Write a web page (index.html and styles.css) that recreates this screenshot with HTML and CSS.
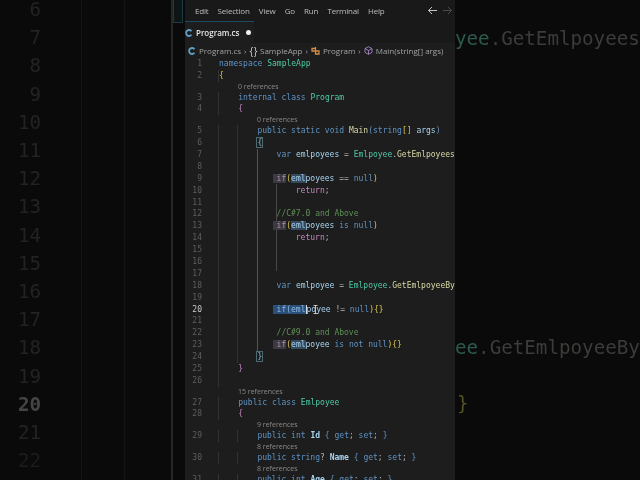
FILE: index.html
```html
<!DOCTYPE html>
<html lang="en">
<head>
<meta charset="utf-8">
<title>Program.cs</title>
<link rel="stylesheet" href="styles.css">
</head>
<body>
<div class="stage">
  <div class="side left">
    <div class="bignum">6</div><div class="bignum">7</div><div class="bignum">8</div><div class="bignum">9</div><div class="bignum">10</div><div class="bignum">11</div><div class="bignum">12</div><div class="bignum">13</div><div class="bignum">14</div><div class="bignum">15</div><div class="bignum">16</div><div class="bignum">17</div><div class="bignum">18</div><div class="bignum">19</div><div class="bignum cur">20</div><div class="bignum">21</div><div class="bignum dim">22</div>
    <div class="bigbrace"></div>
  </div>
  <main class="panel">
    <nav class="menu">
      <span>Edit</span><span>Selection</span><span>View</span><span>Go</span><span>Run</span><span>Terminal</span><span>Help</span>
      <span class="arrows">
        <svg width="11" height="9" viewBox="0 0 11 9"><path d="M10 4.5H1.5M5 1L1.5 4.5L5 8" fill="none" stroke="#c4c4c4" stroke-width="1"/></svg>
        <svg width="11" height="9" viewBox="0 0 11 9"><path d="M1 4.5H9.5M6 1L9.5 4.5L6 8" fill="none" stroke="#4a4a4a" stroke-width="1"/></svg>
      </span>
    </nav>
    <div class="tabs">
      <div class="tab">
        <svg class="cs" width="8" height="8" viewBox="0 0 8 8"><path d="M6.5 2.2A3 3 0 1 0 6.5 5.8" fill="none" stroke="#5f9fc4" stroke-width="1.8"/></svg>
        <span>Program.cs</span><i class="dot"></i>
      </div>
    </div>
    <div class="crumbs">
      <svg class="cs" width="8" height="8" viewBox="0 0 8 8"><path d="M6.5 2.2A3 3 0 1 0 6.5 5.8" fill="none" stroke="#5f9fc4" stroke-width="1.8"/></svg>
      <span>Program.cs</span><b>›</b><span class="ns">{}</span><span>SampleApp</span><b>›</b>
      <svg width="9" height="9" viewBox="0 0 9 9"><path d="M1 2.5H4.5V5H8V8H4.5V5H1Z M4.5 1V2.5" fill="none" stroke="#d18b45" stroke-width="1.3"/></svg>
      <span>Program</span><b>›</b>
      <svg width="9" height="9" viewBox="0 0 9 9"><path d="M4.5 .7L8 2.6V6.4L4.5 8.3L1 6.4V2.6ZM1 2.6L4.5 4.5L8 2.6M4.5 4.5V8.3" fill="none" stroke="#a684c9" stroke-width=".9"/></svg>
      <span>Main(string[] args)</span>
    </div>
    <div class="code">
      <div class="ln"><u>1</u><code><s class="k">namespace</s> <s class="t">SampleApp</s></code></div>
      <div class="ln"><u>2</u><code><s class="y">{</s></code></div>
      <div class="lens l1">0 references</div>
      <div class="ln"><u>3</u><code class="i1"><s class="k">internal class</s> <s class="t">Program</s></code></div>
      <div class="ln"><u>4</u><code class="i1"><s class="m">{</s></code></div>
      <div class="lens l2">0 references</div>
      <div class="ln"><u>5</u><code class="i2"><s class="k">public static void</s> <s class="f">Main</s><s class="b">(</s><s class="k">string</s><s class="y">[]</s> <s class="v">args</s><s class="b">)</s></code></div>
      <div class="ln"><u>6</u><code class="i2"><s class="brace">{</s></code></div>
      <div class="ln"><u>7</u><code class="i3"><s class="k">var</s> <s class="v">emlpoyees</s> = <s class="t">Emlpoyee</s>.<s class="f">GetEmlpoyees</s></code></div>
      <div class="ln"><u>8</u><code></code></div>
      <div class="ln"><u>9</u><code class="i3"><s class="hl">if</s><s class="y">(</s><s class="w">eml</s><s class="v">poyees</s> == <s class="k">null</s><s class="y">)</s></code></div>
      <div class="ln"><u>10</u><code class="i4"><s class="m">return</s>;</code></div>
      <div class="ln"><u>11</u><code></code></div>
      <div class="ln"><u>12</u><code class="i3"><s class="c">//C#7.0 and Above</s></code></div>
      <div class="ln"><u>13</u><code class="i3"><s class="hl">if</s><s class="y">(</s><s class="w">eml</s><s class="v">poyees</s> <s class="k">is null</s><s class="y">)</s></code></div>
      <div class="ln"><u>14</u><code class="i4"><s class="m">return</s>;</code></div>
      <div class="ln"><u>15</u><code></code></div>
      <div class="ln"><u>16</u><code></code></div>
      <div class="ln"><u>17</u><code></code></div>
      <div class="ln"><u>18</u><code class="i3"><s class="k">var</s> <s class="v">emlpoyee</s> = <s class="t">Emlpoyee</s>.<s class="f">GetEmlpoyeeBy</s></code></div>
      <div class="ln"><u>19</u><code></code></div>
      <div class="ln cur"><u>20</u><code class="i3"><s class="sel">if(eml</s><s class="v">poyee</s> != <s class="k">null</s><s class="y">){}</s></code>
        <svg class="ibeam" width="5" height="9" viewBox="0 0 5 9"><path d="M.5 .5H4.5M2.5 .5V8.5M.5 8.5H4.5" fill="none" stroke="#e8e8e8" stroke-width=".8"/></svg>
      </div>
      <div class="ln"><u>21</u><code></code></div>
      <div class="ln"><u>22</u><code class="i3"><s class="c">//C#9.0 and Above</s></code></div>
      <div class="ln"><u>23</u><code class="i3"><s class="hl">if</s><s class="y">(</s><s class="w">eml</s><s class="v">poyee</s> <s class="k">is not null</s><s class="y">){}</s></code></div>
      <div class="ln"><u>24</u><code class="i2"><s class="brace">}</s></code></div>
      <div class="ln"><u>25</u><code class="i1"><s class="m">}</s></code></div>
      <div class="ln"><u>26</u><code></code></div>
      <div class="lens l1">15 references</div>
      <div class="ln"><u>27</u><code class="i1"><s class="k">public class</s> <s class="t">Emlpoyee</s></code></div>
      <div class="ln"><u>28</u><code class="i1"><s class="m">{</s></code></div>
      <div class="lens l2">9 references</div>
      <div class="ln"><u>29</u><code class="i2"><s class="k">public int</s> <s class="v b6">Id</s> <s class="b">{</s> <s class="k">get</s>; <s class="k">set</s>; <s class="b">}</s></code></div>
      <div class="lens l2">8 references</div>
      <div class="ln"><u>30</u><code class="i2"><s class="k">public string</s>? <s class="v b6">Name</s> <s class="b">{</s> <s class="k">get</s>; <s class="k">set</s>; <s class="b">}</s></code></div>
      <div class="lens l2">8 references</div>
      <div class="ln"><u>31</u><code class="i2"><s class="k">public int</s> <s class="v b6">Age</s> <s class="b">{</s> <s class="k">get</s>; <s class="k">set</s>; <s class="b">}</s></code></div>
    </div>
  </main>
  <div class="side right">
    <div class="bigcode first"><s class="gt">yee</s>.GetEmlpoyees</div>
    <div class="bigcode second"><s class="gt">ee</s>.GetEmlpoyeeBy</div>
    <div class="bigcode third"><s class="gy">}</s></div>
  </div>
</div>
</body>
</html>
```
FILE: styles.css
```css
* { box-sizing: border-box; }
html, body { margin: 0; height: 100%; background: #0a0a0a; overflow: hidden; }
s, u { text-decoration: none; }
i { font-style: normal; }
.stage { display: flex; width: 640px; height: 480px; overflow: hidden; filter: blur(.3px); }
.side { width: 185px; flex: none; background-color: #0a0a0a; font: 19.2px/28.2px "DejaVu Sans Mono", monospace; }
.left {
  position: relative;
  padding: 0 144px 0 0;
  margin-top: -4px;
  height: 484px;
  background-image: linear-gradient(#141414, #141414), linear-gradient(#141414, #141414), linear-gradient(#262626, #262626);
  background-size: 1px 100%, 1px 100%, 2px 100%;
  background-position: 81px 0, 124px 0, 171px 0;
  background-repeat: no-repeat;
}
.bignum { text-align: right; color: #232323; }
.bignum.cur { color: #454545; font-weight: bold; }
.bignum.dim { color: #1c1c20; }
.bigbrace { position: absolute; left: 173px; top: 0; width: 10px; height: 27px; border: 1px solid #1c3a44; background: #0d1517; }
.right { width: 185px; padding-top: 25px; color: #3a3d39; }
.bigcode { white-space: nowrap; overflow: hidden; }
.second { margin-top: 281px; }
.third { margin-top: 28px; padding-left: 2px; }
.gt { color: #2c5a4e; }
.gy { color: #55522a; }
.panel { width: 270px; flex: none; background: #1d1d1d; font-family: "Open Sans", sans-serif; overflow: hidden; }
.menu { height: 21px; display: flex; align-items: center; gap: 9.2px; padding-left: 10px; background: #191919; color: #bdbdbd; font-size: 8px; letter-spacing: -.2px; }
.arrows { margin-left: auto; display: flex; gap: 4px; padding-right: 2px; }
.tabs { height: 22px; background: #191919; }
.tab { width: 69px; height: 22px; background: #1d1d1d; border-top: 1px solid #1f4a66; display: flex; align-items: center; gap: 3px; color: #e4e4e4; font-size: 8px; font-weight: 600; }
.dot { width: 5px; height: 5px; border-radius: 50%; background: #f0f0f0; margin-left: 4px; }
.crumbs { height: 15px; display: flex; align-items: center; gap: 3px; padding-left: 3px; color: #a2a2a2; font-size: 8px; white-space: nowrap; }
.crumbs b { font-weight: 400; color: #a0a0a0; }
.crumbs .ns { color: #d0d0d0; font-size: 10px; letter-spacing: .5px; margin-right: -1px; }
.code { font-family: "DejaVu Sans Mono", monospace; font-size: 8px; color: #b8b8b8;
  background-image: linear-gradient(#333, #333), linear-gradient(#333, #333), linear-gradient(#333, #333), linear-gradient(#555, #555), linear-gradient(#484848, #484848);
  background-size: 1px 100%, 1px 247px, 1px 100%, 1px 202px, 1px 87px;
  background-position: 33px 12px, 52px 58px, 52px 362px, 72px 91px, 91px 126px;
  background-repeat: no-repeat;
}
.ln { position: relative; display: flex; height: 11.9px; line-height: 11.9px; white-space: nowrap; }
.ln u { width: 17px; flex: none; text-align: right; color: #5e5e5e; }
.ln.cur u { color: #c8c8c8; }
.ln code { font: inherit; margin-left: 17px; }
.i1 { padding-left: 19.2px; }
.i2 { padding-left: 38.4px; }
.i3 { padding-left: 57.6px; }
.i4 { padding-left: 76.8px; }
.lens { height: 9.8px; font: 7px/9.8px "Open Sans", sans-serif; color: #8a8a8a; background: #1d1d1d; }
.l1 { padding-left: 53px; }
.l2 { padding-left: 72px; }
.k { color: #5f93c4; }
.t { color: #4ec9a6; }
.f { color: #d8d8a8; }
.v { color: #a8d4f0; }
.b6 { font-weight: bold; }
.y { color: #d9c74a; }
.m { color: #c586c0; }
.b { color: #5f93c4; }
.c { color: #5f8f55; }
.hl { background: #3a3a40; color: #b58ab0; padding-left: 4px; margin-left: -4px; }
.w { background: #35495c; color: #a8d4f0; }
.sel { background: #2a4f78; color: #8fb8e0; padding-left: 4px; margin-left: -4px; border-right: 1px solid #cfd8e0; }
.brace { outline: 1px solid #4d6a70; color: #8fb8d0; }
.ibeam { position: absolute; left: 128px; top: 1px; }
```
